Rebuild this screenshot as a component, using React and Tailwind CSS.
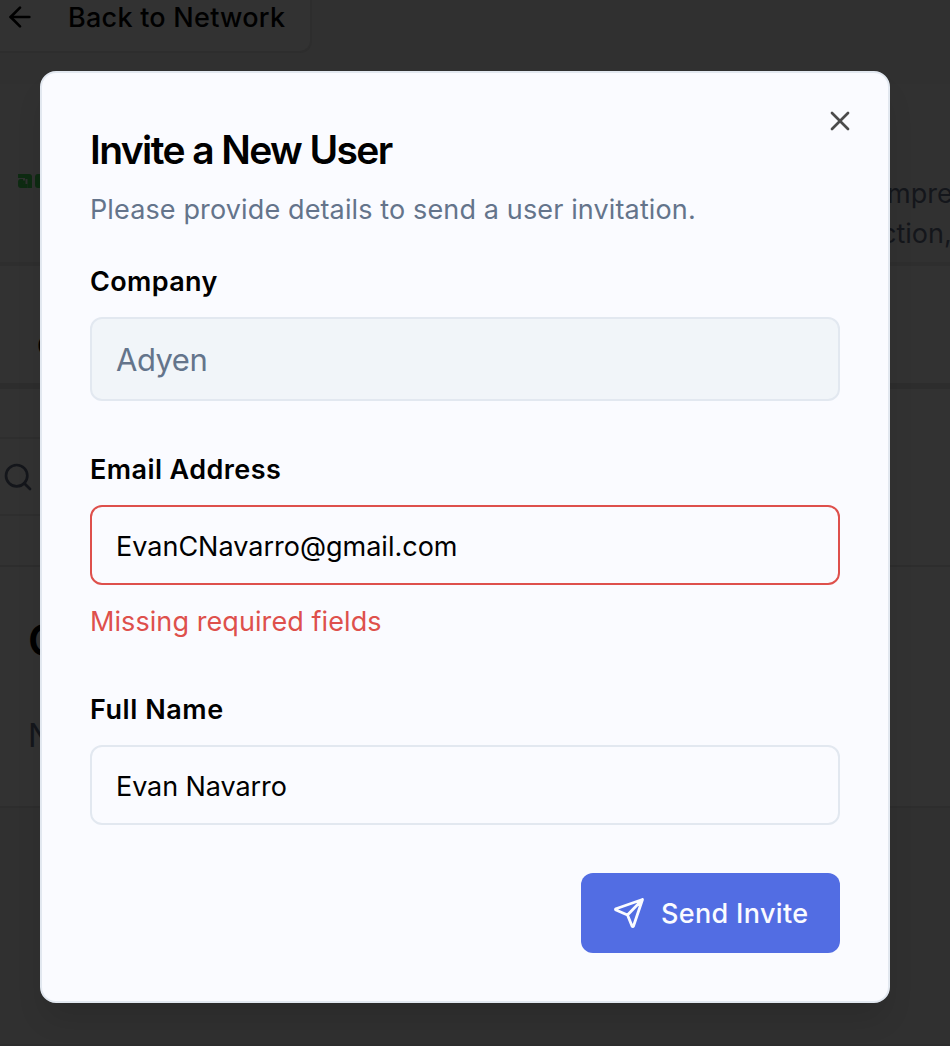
import { ArrowLeft, Search, X } from "lucide-react";

const inputBase = "w-full rounded-[12px] border-2 px-6 pt-[2px] text-black outline-none";

function Backdrop() {
  return (
    <div className="flex h-[1046px] w-[950px] flex-col bg-[#303030]" aria-hidden="true">
      <div className="h-[84px] shrink-0">
        <div className="flex h-[53px] w-[312px] items-start rounded-br-[12px] border-r-2 border-b-2 border-[#2d2d2d] bg-[#323232] pl-[4px]">
          <ArrowLeft className="mt-[1px] h-8 w-8 text-black" strokeWidth={2} />
          <span className="mt-[1px] ml-8 text-[27px] leading-[34px] font-medium tracking-[0.25px] whitespace-nowrap text-black">Back to Network</span>
        </div>
      </div>
      <div className="flex h-[178px] shrink-0 items-start justify-between bg-[#313131]">
        <svg className="mt-[90px] ml-[17px] h-[16px] w-[36px]" viewBox="0 0 36 16" fill="#0e2b12">
          <path d="M1 0H12Q15 0 15 3V14H10.5V5H8.5V10H7Q6 10 6 9V6.5H8V4H1Z" />
          <path d="M4 5H6V9Q6 10 7 10H10.5V14H4Q1 14 1 11V8Q1 5 4 5Z" />
          <path d="M35 0H21Q18 0 18 3V11Q18 14 21 14H35Z" />
        </svg>
        <div className="mt-[90px] w-[63px] text-[27px] leading-10 whitespace-nowrap text-[#14161b]">
          <div>mpre</div>
          <div className="-ml-[6px]">ction,</div>
        </div>
      </div>
      <div className="h-[121px] shrink-0 border-t-4 border-[#2e2e2e] bg-[#323232]">
        <div className="pt-[60px] pl-[37px] text-[28px] leading-10 font-medium text-black">O</div>
      </div>
      <div className="h-[54px] shrink-0 border-t-6 border-[#2d2d2d] bg-[#323232]" />
      <div className="shrink-0 bg-[#323232]">
        <div className="flex h-[79px] w-[870px] items-center border-y-2 border-[#2e2e2e] pl-[2px]">
          <Search className="h-8 w-8 text-[#14161b]" strokeWidth={2} />
        </div>
      </div>
      <div className="h-[49px] shrink-0 bg-[#323232]" />
      <div className="h-[243px] shrink-0 border-y-2 border-[#2d2d2d] bg-[#323232] pt-[47px] pl-[28px]">
        <div className="text-[44px] leading-[52px] font-semibold text-black">C</div>
        <div className="mt-[48px] text-[32px] leading-[44px] text-[#14161b]">N</div>
      </div>
      <div className="flex-1 border-b-2 border-[#2d2d2d]" />
    </div>
  );
}

function PlaneIcon() {
  return (
    <svg className="h-8 w-8" viewBox="0 0 32 32" fill="none" stroke="currentColor" strokeWidth="2.8" strokeLinecap="round" strokeLinejoin="round">
      <path d="M29.5 2.5L20.5 29Q19.8 30.4 19 29L14.5 18L3 13Q1.9 12.4 3 11.7L29.5 2.5L14.5 18" />
    </svg>
  );
}

function InviteDialog() {
  return (
    <div role="dialog" aria-labelledby="invite-title" className="absolute top-[71px] left-10 h-[932px] w-[850px] rounded-[16px] border-2 border-[#e2e8f0] bg-[#fafbff] px-12 pt-12 shadow-[0_20px_30px_-6px_rgba(0,0,0,0.12)]">
      <button aria-label="Close" className="absolute top-[32px] right-[32px] text-[#4b4b4b]">
        <X className="h-8 w-8" strokeWidth={2} />
      </button>
      <h2 id="invite-title" className="mt-[9px] text-[39px] leading-10 font-semibold tracking-[-1.6px] whitespace-nowrap text-black">Invite a New User</h2>
      <p className="mt-[20px] text-[27px] leading-10 tracking-[0.13px] whitespace-nowrap text-[#64748b]">Please provide details to send a user invitation.</p>
      <form onSubmit={(event) => event.preventDefault()}>
        <div className="mt-[38px]">
          <label htmlFor="company" className="block text-[27px] leading-7 font-semibold tracking-[0.35px] text-black">Company</label>
          <input id="company" disabled defaultValue="Adyen" className="mt-[21px] block h-[84px] w-full rounded-[12px] border-2 border-[#e2e8f0] bg-[#f1f5f9] px-6 text-[31px] tracking-[-0.5px] text-[#64748b]" />
        </div>
        <div className="mt-[55px]">
          <label htmlFor="email" className="block text-[27px] leading-7 font-semibold tracking-[0.42px] text-black">Email Address</label>
          <input id="email" defaultValue="EvanCNavarro@gmail.com" className={`${inputBase} mt-[21px] block h-[80px] border-[#de504c] text-[27px]`} />
          <p className="mt-[17px] text-[27px] leading-10 tracking-[0.08px] text-[#de504c]">Missing required fields</p>
        </div>
        <div className="mt-[54px]">
          <label htmlFor="name" className="block text-[27px] leading-7 font-semibold tracking-[0.55px] text-black">Full Name</label>
          <input id="name" defaultValue="Evan Navarro" className={`${inputBase} mt-[21px] block h-[80px] border-[#e2e8f0] text-[27px] tracking-[-0.08px]`} />
        </div>
        <div className="mt-12 flex justify-end">
          <button className="flex h-20 w-[259px] items-center gap-4 rounded-[12px] bg-[#526de3] pl-8 text-[27px] font-medium tracking-[0.33px] whitespace-nowrap text-[#fafbff]">
            <PlaneIcon />
            <span className="pt-[2px]">Send Invite</span>
          </button>
        </div>
      </form>
    </div>
  );
}

export default function App() {
  return (
    <main className="relative h-[1046px] w-[950px] overflow-hidden font-[Inter,'Liberation_Sans',sans-serif]">
      <Backdrop />
      <InviteDialog />
    </main>
  );
}
